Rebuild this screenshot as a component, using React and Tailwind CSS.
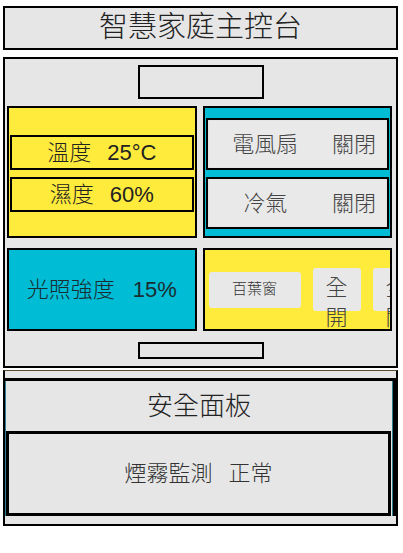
import React from "react";

function Reading({ label, value }) {
  return (
    <div className="h-[35px] border-2 border-black bg-[#ffeb3b] flex items-center justify-center gap-[16px] text-[22px] text-[#222]">
      <span>{label}</span>
      <span className="font-normal">{value}</span>
    </div>
  );
}

function Device({ name, status }) {
  return (
    <div className="h-[52px] border-2 border-black bg-[#e4e4e4] flex p-[1px]">
      <div className="flex-1 bg-[#e9e9e9] flex items-center justify-center text-[22px] text-[#444]">
        {name}
      </div>
      <div className="w-[64px] bg-[#e9e9e9] flex items-center justify-center text-[22px] text-[#444]">
        {status}
      </div>
    </div>
  );
}

function WrapButton({ text }) {
  return (
    <div className="shrink-0 w-[48px] h-[43px] bg-[#e8e8e8] rounded-[3px] px-[4px] pt-[5px] text-center text-[22px] leading-[30px] text-[#444] break-all">
      {text}
    </div>
  );
}

export default function App() {
  return (
    <div className="w-[403px] h-[553px] bg-white pt-[6px] pl-[3px] pr-[5px] font-['Liberation_Sans','Noto_Sans_CJK_TC',sans-serif] font-light text-[#222]">
      <header className="h-[44px] border-2 border-black bg-[#e6e6e6] flex items-center justify-center text-[29px] text-[#222]">
        智慧家庭主控台
      </header>

      <main className="mt-[7px] border-2 border-black bg-[#e6e6e6] pt-[6px] pb-[7px]">
        <div className="mx-auto w-[126px] h-[34px] border-2 border-black" />

        <div className="mt-[7px] grid grid-cols-2 gap-[6px] pl-[2px] pr-[4px]">
          <div className="h-[132px] border-2 border-black bg-[#ffeb3b] flex flex-col gap-[7px] pt-[27px] px-[1px]">
            <Reading label="溫度" value="25°C" />
            <Reading label="濕度" value="60%" />
          </div>
          <div className="h-[132px] border-2 border-black bg-[#00bcd4] flex flex-col gap-[7px] pt-[10px] px-[1px]">
            <Device name="電風扇" status="關閉" />
            <Device name="冷氣" status="關閉" />
          </div>
        </div>

        <div className="mt-[10px] grid grid-cols-2 gap-[6px] pl-[2px] pr-[4px]">
          <div className="h-[83px] border-2 border-black bg-[#00bcd4] flex items-center justify-center gap-[18px] text-[22px] text-[#1c2b30]">
            <span>光照強度</span>
            <span className="font-normal">15%</span>
          </div>
          <div className="h-[83px] border-2 border-black bg-[#ffeb3b] overflow-hidden flex items-center gap-[12px] pl-[4px]">
            <div className="shrink-0 w-[92px] h-[36px] bg-[#e8e8e8] rounded-[3px] flex items-center justify-center text-[15px] text-[#333]">
              百葉窗
            </div>
            <WrapButton text="全開" />
            <WrapButton text="全關" />
          </div>
        </div>

        <div className="mt-[11px] mx-auto w-[126px] h-[17px] border-2 border-black" />
      </main>

      <section className="mt-[2px] border-t border-t-[#5a4a30] border-x-2 border-b-2 border-x-black border-b-black bg-[#e6e6e6] pt-[7px] pb-[8px]">
        <div className="border-t-[3px] border-r-[3px] border-black">
          <div className="border-x border-[#2e7d8c]">
            <div className="h-[50px] flex items-center justify-center text-[26px] text-[#222]">
              安全面板
            </div>
            <div className="h-[85px] mr-[1px] border-[3px] border-black bg-[#e6e6e6] flex items-center justify-center gap-[16px] text-[22px] text-[#333]">
              <span>煙霧監測</span>
              <span>正常</span>
            </div>
          </div>
        </div>
      </section>
    </div>
  );
}
